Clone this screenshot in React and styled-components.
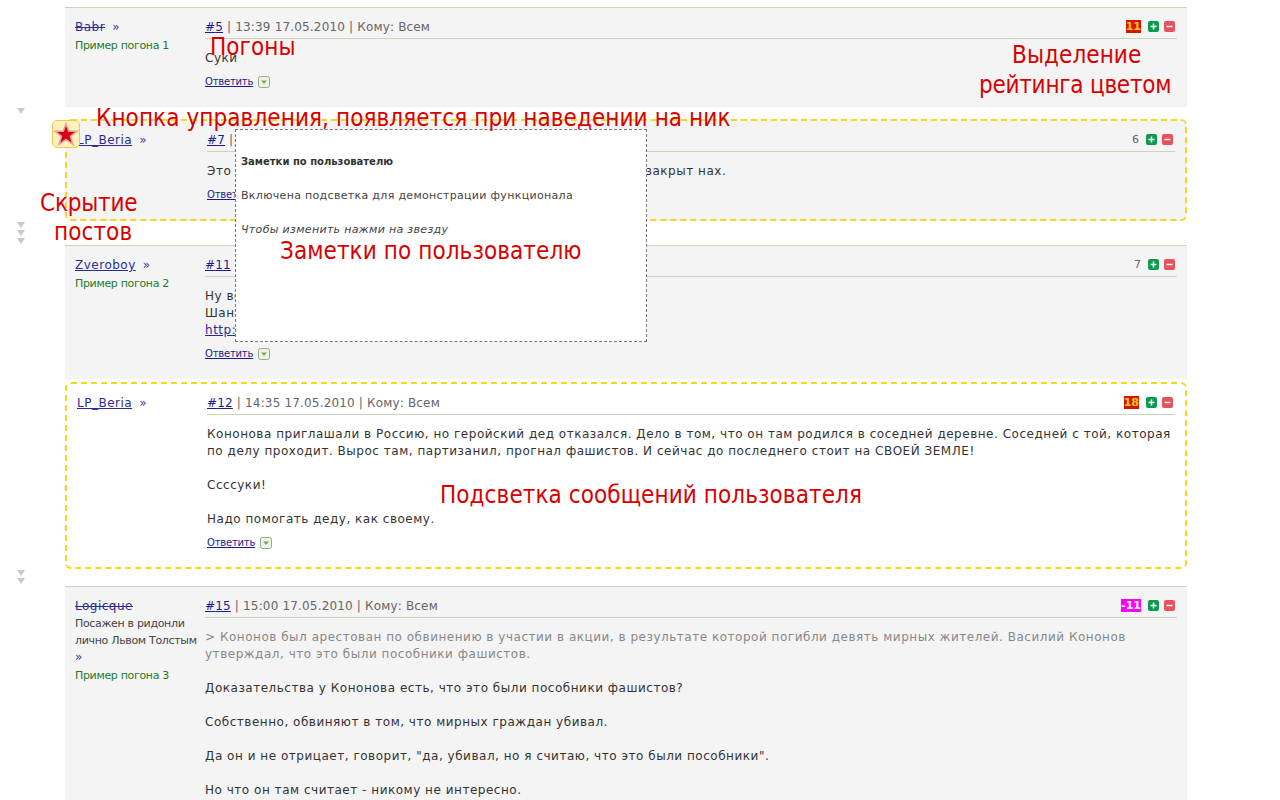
import styled, { createGlobalStyle } from "styled-components";

const GlobalStyle = createGlobalStyle`
  html, body {
    margin: 0;
    padding: 0;
    background: #fff;
    overflow: hidden;
    height: 800px;
  }
  body {
    font-family: "DejaVu Sans", Verdana, sans-serif;
    font-size: 12px;
    color: #333;
  }
`;

const Page = styled.div`
  position: relative;
  width: 1280px;
  height: 800px;
  overflow: hidden;
  padding-top: 7px;
  box-sizing: border-box;
`;

const Gap = styled.div`
  height: ${(p) => p.$height}px;
  padding: 1px 0 0 17px;
  box-sizing: border-box;
  display: flex;
  flex-direction: column;
  gap: 2px;
`;

const HideArrow = styled.span`
  width: 0;
  height: 0;
  border-left: 4px solid transparent;
  border-right: 4px solid transparent;
  border-top: 6px solid #c8c8c8;
`;

const Post = styled.div`
  position: relative;
  margin: 0 93px 0 65px;
  display: flex;
  box-sizing: border-box;
  padding: 11px 10px ${(p) => (p.$marked ? 16 : 17)}px;
  border: ${(p) => (p.$marked ? "2px dashed #f7d61e" : "none")};
  border-top: ${(p) => (p.$marked ? "2px dashed #f7d61e" : "1px solid #c9d4b9")};
  border-radius: ${(p) => (p.$marked ? "6px" : "0")};
  background: ${(p) => (p.$white ? "#fff" : "#f4f4f4")};
`;

const Author = styled.div`
  width: 130px;
  flex: none;
  font-size: 11px;
  line-height: 17px;
  letter-spacing: -0.32px;
`;

const Nick = styled.a`
  font-size: 12px;
  color: #2b2b96;
  text-decoration: ${(p) => (p.$banned ? "line-through" : "underline")};
  letter-spacing: 0.5px;
`;

const Raquo = styled.span`
  color: #3a3aa0;
  font-size: 12px;
  margin-left: ${(p) => (p.$flush ? 0 : 7)}px;
`;

const Status = styled.div`
  color: #444;
  width: 125px;
  white-space: nowrap;
`;

const Rank = styled.div`
  color: #1f7a1f;
  margin-top: 1px;
`;

const Main = styled.div`
  flex: 1;
  min-width: 0;
`;

const Head = styled.div`
  display: flex;
  align-items: center;
  justify-content: space-between;
  height: 20px;
  box-sizing: border-box;
  border-bottom: 1px solid #c9d4b9;
  color: #666;
  padding-bottom: 4px;
  letter-spacing: 0.17px;
`;

const Num = styled.a`
  color: #1c1c90;
  text-decoration: underline;
`;

const Rating = styled.div`
  display: flex;
  align-items: center;
  gap: 5px;
  padding-right: 2px;
  letter-spacing: 0;
`;

const Score = styled.span`
  font-size: 11px;
  font-weight: ${(p) => (p.$hot ? "bold" : "normal")};
  color: ${(p) => (p.$hot === "bad" ? "#fff" : p.$hot ? "#ffc81e" : "#666")};
  background: ${(p) => (p.$hot === "bad" ? "#ff00ff" : p.$hot ? "#d81400" : "none")};
  line-height: 13px;
  margin-right: 2px;
`;

const VoteBox = styled.svg`
  display: block;
  width: 11px;
  height: 11px;
`;

const Vote = ({ plus }) => (
  <VoteBox viewBox="0 0 11 11">
    <rect width="11" height="11" rx="2" fill={plus ? "#0c9a50" : "#e8505c"} />
    <path d="M2.5 5.5h6" stroke="#fff" strokeWidth="1.5" />
    {plus && <path d="M5.5 2.5v6" stroke="#fff" strokeWidth="1.5" />}
  </VoteBox>
);

const Body = styled.div`
  margin-top: 11px;
  line-height: 17px;
  letter-spacing: 0.52px;
`;

const Para = styled.div`
  color: ${(p) => (p.$quote ? "#888" : "#333")};
  margin-bottom: ${(p) => (p.$last ? 0 : 17)}px;
`;

const Link = styled.a`
  color: #2b2b96;
  text-decoration: underline;
`;

const Footer = styled.div`
  margin-top: 6px;
  display: flex;
  align-items: center;
  gap: 5px;
  height: 17px;
`;

const Reply = styled.a`
  font-size: 10px;
  letter-spacing: -0.2px;
  color: #1c1c90;
  text-decoration: underline;
`;

const ReplyIcon = styled.svg`
  display: block;
  width: 12px;
  height: 12px;
`;

const ReplyArrow = () => (
  <ReplyIcon viewBox="0 0 12 12">
    <rect x="0.5" y="0.5" width="11" height="11" rx="2" fill="#eef3e6" stroke="#8fb07f" />
    <path d="M3 4.5h6L6 8z" fill="#7f9f70" />
  </ReplyIcon>
);

const StarButton = styled.div`
  position: absolute;
  left: -15px;
  top: -1px;
  width: 28px;
  height: 28px;
  box-sizing: border-box;
  background: #fff2b8;
  border: 1px solid #f0c850;
  border-radius: 5px;
  display: flex;
  align-items: center;
  justify-content: center;
`;

const Notes = styled.div`
  position: absolute;
  left: 168px;
  top: 8px;
  width: 412px;
  height: 213px;
  box-sizing: border-box;
  background: #fff;
  border: 1px dashed #777;
  padding: 23px 5px 0;
  color: #444;
  font-size: 11px;
  letter-spacing: 0.32px;
  line-height: 17px;
  z-index: 2;
`;

const NotesTitle = styled.div`
  font-size: 10px;
  font-weight: bold;
  letter-spacing: 0;
  color: #333;
  margin-bottom: 17px;
`;

const NotesLine = styled.div`
  margin-bottom: 17px;
  font-style: ${(p) => (p.$italic ? "italic" : "normal")};
`;

const Note = styled.div`
  position: absolute;
  left: ${(p) => p.$x}px;
  top: ${(p) => p.$y}px;
  font-family: "DejaVu Sans Condensed", "DejaVu Sans", sans-serif;
  font-stretch: condensed;
  font-size: 24px;
  letter-spacing: ${(p) => p.$spacing ?? 0.08}px;
  line-height: 30px;
  color: #d80000;
  white-space: nowrap;
  z-index: 3;
`;

const Star = () => (
  <svg width="26" height="26" viewBox="0 0 24 24">
    <path
      d="M12 2.5l2.5 7h7.6l-6 4.6 2.3 7.4-6.4-4.4-6.4 4.4 2.3-7.4-6-4.6h7.6z"
      fill="#d80010"
      stroke="#e8a0a0"
      strokeWidth="1.4"
    />
  </svg>
);

const Header = ({ num, time, score, hot }) => (
  <Head>
    <span>
      <Num>#{num}</Num> | {time} 17.05.2010 | Кому: Всем
    </span>
    <Rating>
      <Score $hot={hot}>{score}</Score>
      <Vote plus />
      <Vote />
    </Rating>
  </Head>
);

const ReplyRow = () => (
  <Footer>
    <Reply>Ответить</Reply>
    <ReplyArrow />
  </Footer>
);

export default function App() {
  return (
    <Page>
      <GlobalStyle />

      <Post>
        <Author>
          <Nick $banned>Babr</Nick>
          <Raquo>»</Raquo>
          <Rank>Пример погона 1</Rank>
        </Author>
        <Main>
          <Header num="5" time="13:39" score="11" hot="good" />
          <Body>
            <Para $last>Суки</Para>
          </Body>
          <ReplyRow />
        </Main>
      </Post>

      <Gap $height={12}>
        <HideArrow />
      </Gap>

      <Post $marked>
        <StarButton>
          <Star />
        </StarButton>
        <Author>
          <Nick>LP_Beria</Nick>
          <Raquo>»</Raquo>
        </Author>
        <Main>
          <Header num="7" time="13:52" score="6" />
          <Body>
            <Para $last>Это уже давным-давно известно всем, вопрос этот у нас давно закрыт нах.</Para>
          </Body>
          <ReplyRow />
        </Main>
        <Notes>
          <NotesTitle>Заметки по пользователю</NotesTitle>
          <NotesLine>Включена подсветка для демонстрации функционала</NotesLine>
          <NotesLine $italic>Чтобы изменить нажми на звезду</NotesLine>
        </Notes>
      </Post>

      <Gap $height={24}>
        <HideArrow />
        <HideArrow />
        <HideArrow />
      </Gap>

      <Post>
        <Author>
          <Nick>Zveroboy</Nick>
          <Raquo>»</Raquo>
          <Rank>Пример погона 2</Rank>
        </Author>
        <Main>
          <Header num="11" time="14:21" score="7" />
          <Body>
            <Para $last>
              Ну вот
              <br />
              Шансов нет
              <br />
              <Link>http://lenta.ru/</Link>
            </Para>
          </Body>
          <ReplyRow />
        </Main>
      </Post>

      <Gap $height={3} />

      <Post $marked $white>
        <Author>
          <Nick>LP_Beria</Nick>
          <Raquo>»</Raquo>
        </Author>
        <Main>
          <Header num="12" time="14:35" score="18" hot="good" />
          <Body>
            <Para>
              Кононова приглашали в Россию, но геройский дед отказался. Дело в том, что он там родился в
              соседней деревне. Соседней с той, которая по делу проходит. Вырос там, партизанил, прогнал
              фашистов. И сейчас до последнего стоит на СВОЕЙ ЗЕМЛЕ!
            </Para>
            <Para>Ссссуки!</Para>
            <Para $last>Надо помогать деду, как своему.</Para>
          </Body>
          <ReplyRow />
        </Main>
      </Post>

      <Gap $height={17}>
        <HideArrow />
        <HideArrow />
      </Gap>

      <Post>
        <Author>
          <Nick $banned>Logicque</Nick>
          <Status>
            Посажен в ридонли
            <br />
            лично Львом Толстым
          </Status>
          <Raquo $flush>»</Raquo>
          <Rank>Пример погона 3</Rank>
        </Author>
        <Main>
          <Header num="15" time="15:00" score="-11" hot="bad" />
          <Body>
            <Para $quote>
              &gt; Кононов был арестован по обвинению в участии в акции, в результате которой погибли девять
              мирных жителей. Василий Кононов утверждал, что это были пособники фашистов.
            </Para>
            <Para>Доказательства у Кононова есть, что это были пособники фашистов?</Para>
            <Para>Собственно, обвиняют в том, что мирных граждан убивал.</Para>
            <Para>Да он и не отрицает, говорит, "да, убивал, но я считаю, что это были пособники".</Para>
            <Para>Но что он там считает - никому не интересно.</Para>
          </Body>
        </Main>
      </Post>

      <Note $x={210} $y={32}>Погоны</Note>
      <Note $x={1012} $y={40}>Выделение</Note>
      <Note $x={979} $y={70} $spacing={-0.25}>рейтинга цветом</Note>
      <Note $x={96} $y={103}>Кнопка управления, появляется при наведении на ник</Note>
      <Note $x={40} $y={188} $spacing={-0.2}>Скрытие</Note>
      <Note $x={54} $y={217}>постов</Note>
      <Note $x={280} $y={236}>Заметки по пользователю</Note>
      <Note $x={440} $y={480}>Подсветка сообщений пользователя</Note>
    </Page>
  );
}
